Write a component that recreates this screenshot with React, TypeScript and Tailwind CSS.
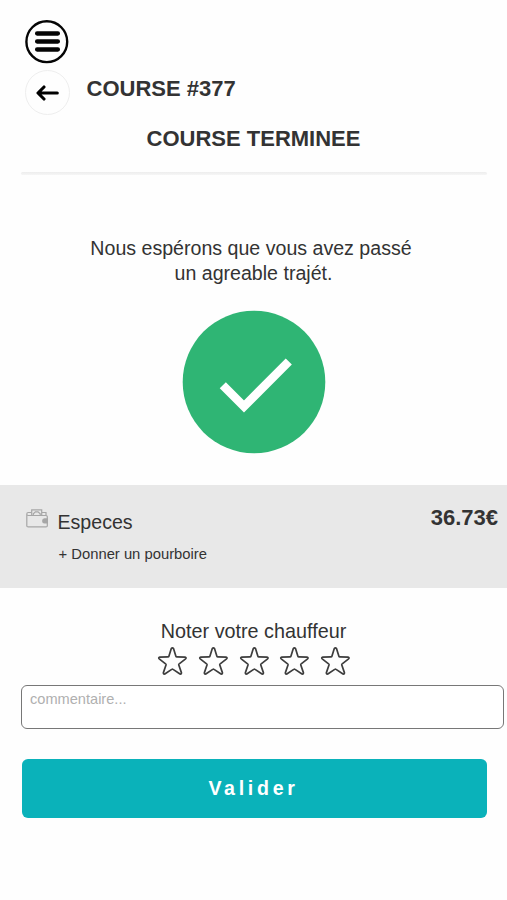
const STARS = [1, 2, 3, 4, 5];

function MenuIcon() {
  return (
    <svg width="44" height="44" viewBox="0 0 44 44" fill="none" stroke="#050505" className="block">
      <circle cx="21.8" cy="21.7" r="20.4" strokeWidth="2.4" />
      <path d="M12.1 13.5H32.9M12.1 21.5H32.9M12.1 29.5H32.9" strokeWidth="4.3" strokeLinecap="round" />
    </svg>
  );
}

function BackIcon() {
  return (
    <svg width="24" height="18" viewBox="0 0 24 18" fill="none" stroke="#000" strokeWidth="3.1" strokeLinecap="round" strokeLinejoin="round">
      <path d="M21.3 9H2.5M8 3L2 9l6 6" />
    </svg>
  );
}

function WalletIcon() {
  return (
    <svg width="23" height="20" viewBox="0 0 23 20" fill="none" stroke="#a6a6a6" strokeWidth="1.2" className="block">
      <path d="M5.5 3.5H2.2Q.8 3.5.8 5V17Q.8 17.8 2.2 17.8H20Q21.3 17.8 21.3 17V7.5Q21.3 6.5 20 6.5H2.2Q.8 6.5.8 5" />
      <path d="M5.7 6.5V.8H15.7V6.5M15.7 3.5H20V6.5" />
      <path d="M7.3 6V4.7L9.4 2.8H12L14.2 4.7V6" />
      <path d="M21.3 9.9H18.5Q16.7 10 16.7 11.9T18.5 13.9H21.3Z" fill="#a6a6a6" />
    </svg>
  );
}

function StarIcon() {
  return (
    <svg width="30" height="30" viewBox="0 0 30 30" fill="none" stroke="#3d3d3d" strokeWidth="1.7" strokeLinejoin="round" className="block">
      <path d="M14.3 2.6Q15.4 1.2 16.5 2.6L18.9 10.2Q19.1 10.9 19.9 10.9L28 11.1Q29.7 11.5 28.6 12.8L22.2 17.8Q21.6 18.3 21.8 19L24.4 26.6Q24.6 28.4 23 28L16.1 23.4Q15.4 22.9 14.7 23.4L7.8 28Q6.2 28.4 6.4 26.6L9 19Q9.2 18.3 8.6 17.8L2.2 12.8Q1.1 11.5 2.8 11.1L10.9 10.9Q11.7 10.9 11.9 10.2Z" />
    </svg>
  );
}

export default function App() {
  return (
    <main className="h-[900px] w-[507px] overflow-hidden bg-[#fefefe] font-['Liberation_Sans',Arial,sans-serif] text-[#333]">
      <header className="h-[172px] pt-5">
        <button className="ml-[25px] block h-11 w-11" aria-label="Menu">
          <MenuIcon />
        </button>
        <div className="mt-1.5 ml-[25px] flex h-[45px] items-center">
          <button className="flex h-[45px] w-[45px] items-center justify-center rounded-full border border-[#eeeeee]" aria-label="Retour">
            <BackIcon />
          </button>
          <h1 className="mb-2 ml-[16.5px] text-[22px] leading-6 font-bold">COURSE #377</h1>
        </div>
        <h2 className="mt-3 text-center text-[22px] leading-6 font-bold">COURSE TERMINEE</h2>
      </header>
      <div className="ml-[21px] h-[3px] w-[466px] rounded-full bg-gradient-to-b from-[#ededed] to-[#f6f6f6]" />

      <p className="mt-[61px] pr-[5px] text-center text-[19.6px] leading-[24.5px]">
        Nous espérons que vous avez passé
        <br />
        <span className="pl-[5px]">un agreable trajét.</span>
      </p>

      <svg width="144" height="144" viewBox="0 0 144 144" className="mt-[25px] ml-[182px] block">
        <circle cx="72" cy="72" r="71.3" fill="#2fb574" />
        <path d="M40.8 75.2L62 96.5L106.8 51.5" fill="none" stroke="#fff" strokeWidth="8.6" />
      </svg>

      <section className="mt-[31px] flex h-[103px] justify-between bg-[#e8e8e8] pr-[9px] pl-[26px]">
        <div className="flex">
          <div className="mt-6">
            <WalletIcon />
          </div>
          <div className="ml-[8.5px] pt-[25px]">
            <p className="text-[19.6px] leading-6">Especes</p>
            <p className="mt-[10px] ml-px text-[14.8px] leading-5">+ Donner un pourboire</p>
          </div>
        </div>
        <p className="mt-[21px] text-[22px] leading-6 font-bold">36.73€</p>
      </section>

      <p className="mt-[31px] text-center text-[19.8px] leading-6">Noter votre chauffeur</p>
      <div className="mt-[3px] ml-[157px] flex gap-[10.8px]">
        {STARS.map((n) => (
          <StarIcon key={n} />
        ))}
      </div>

      <textarea
        placeholder="commentaire..."
        className="mt-[9px] ml-[21px] block h-[44px] w-[483px] resize-none rounded-md border-[1.5px] border-[#777] bg-white px-2 pt-1 text-[14.6px] leading-[18px] placeholder:text-[#b0b0b0]"
      />
      <button className="mt-[30px] ml-[21.5px] flex h-[59px] w-[465px] items-center justify-center rounded-md bg-[#0ab2ba] pr-px text-[19.6px] font-bold tracking-[3.7px] text-white">
        Valider
      </button>
    </main>
  );
}
